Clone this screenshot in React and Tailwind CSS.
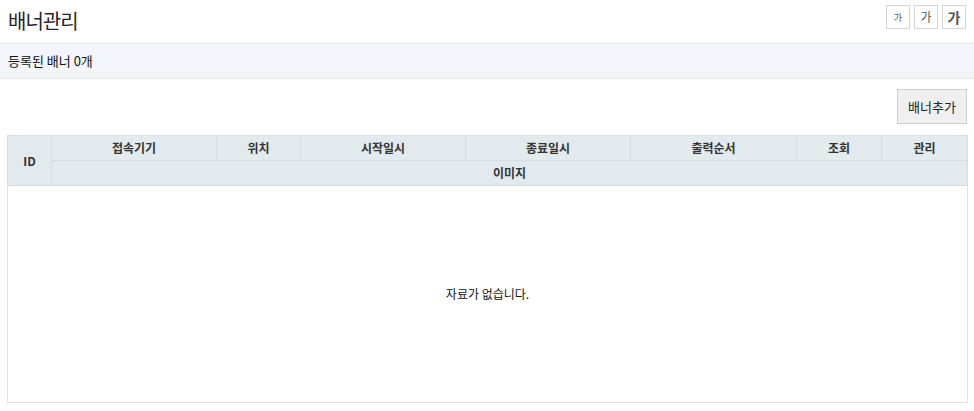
import { useState } from 'react';

const COLS = [
  { label: '접속기기', w: 'w-[165px]' },
  { label: '위치', w: 'w-[84px]' },
  { label: '시작일시', w: 'w-[165px]' },
  { label: '종료일시', w: 'w-[165px]' },
  { label: '출력순서', w: 'w-[166px]' },
  { label: '조회', w: 'w-[85px]' },
  { label: '관리', w: 'w-[86px]' },
];

const thClass = 'border border-[#d3dde2] bg-[#e3eaee] text-[12px] font-bold text-[#333] h-[25px] p-0 text-center';

export default function App() {
  const [banners] = useState([]);

  return (
    <div className="w-[974px] bg-white font-['Noto_Sans_CJK_KR','Noto_Sans',sans-serif] text-[#222]">
      <div className="flex items-start justify-between h-[43px] pl-[8px] pr-[8px]">
        <h1 className="mt-[8px] text-[20px] leading-[26px] font-normal text-[#2e1f29] tracking-[-1px]">배너관리</h1>
        <div className="flex gap-[4px] mt-[5px]">
          <button className="w-[24px] h-[24px] border border-[#d5d5d5] bg-white text-[9px] text-[#555] leading-none">가</button>
          <button className="w-[24px] h-[24px] border border-[#d5d5d5] bg-white text-[12px] text-[#555] leading-none">가</button>
          <button className="w-[24px] h-[24px] border border-[#d5d5d5] bg-white text-[14px] font-bold text-[#555] leading-none">가</button>
        </div>
      </div>

      <div className="h-[36px] border-y border-[#e4e7ec] bg-[#f2f5f9] flex items-center pl-[8px] text-[13px] text-[#111]">
        등록된 배너 {banners.length}개
      </div>

      <div className="flex justify-end pr-[7px] pt-[10px]">
        <button className="w-[70px] h-[35px] border border-[#cccccc] bg-[#efefef] text-[13px] text-[#222]">배너추가</button>
      </div>

      <div className="px-[7px] pt-[11px]">
        <table className="w-[960px] border-collapse table-fixed">
          <thead>
            <tr>
              <th rowSpan={2} className={`${thClass} w-[44px]`}>ID</th>
              {COLS.map((c) => (
                <th key={c.label} className={`${thClass} ${c.w}`}>{c.label}</th>
              ))}
            </tr>
            <tr>
              <th colSpan={7} className={thClass}>이미지</th>
            </tr>
          </thead>
          <tbody>
            <tr>
              <td colSpan={8} className="h-[217px] border border-[#e2e2e2] text-center text-[12px] text-[#111]">
                자료가 없습니다.
              </td>
            </tr>
          </tbody>
        </table>
      </div>
    </div>
  );
}
